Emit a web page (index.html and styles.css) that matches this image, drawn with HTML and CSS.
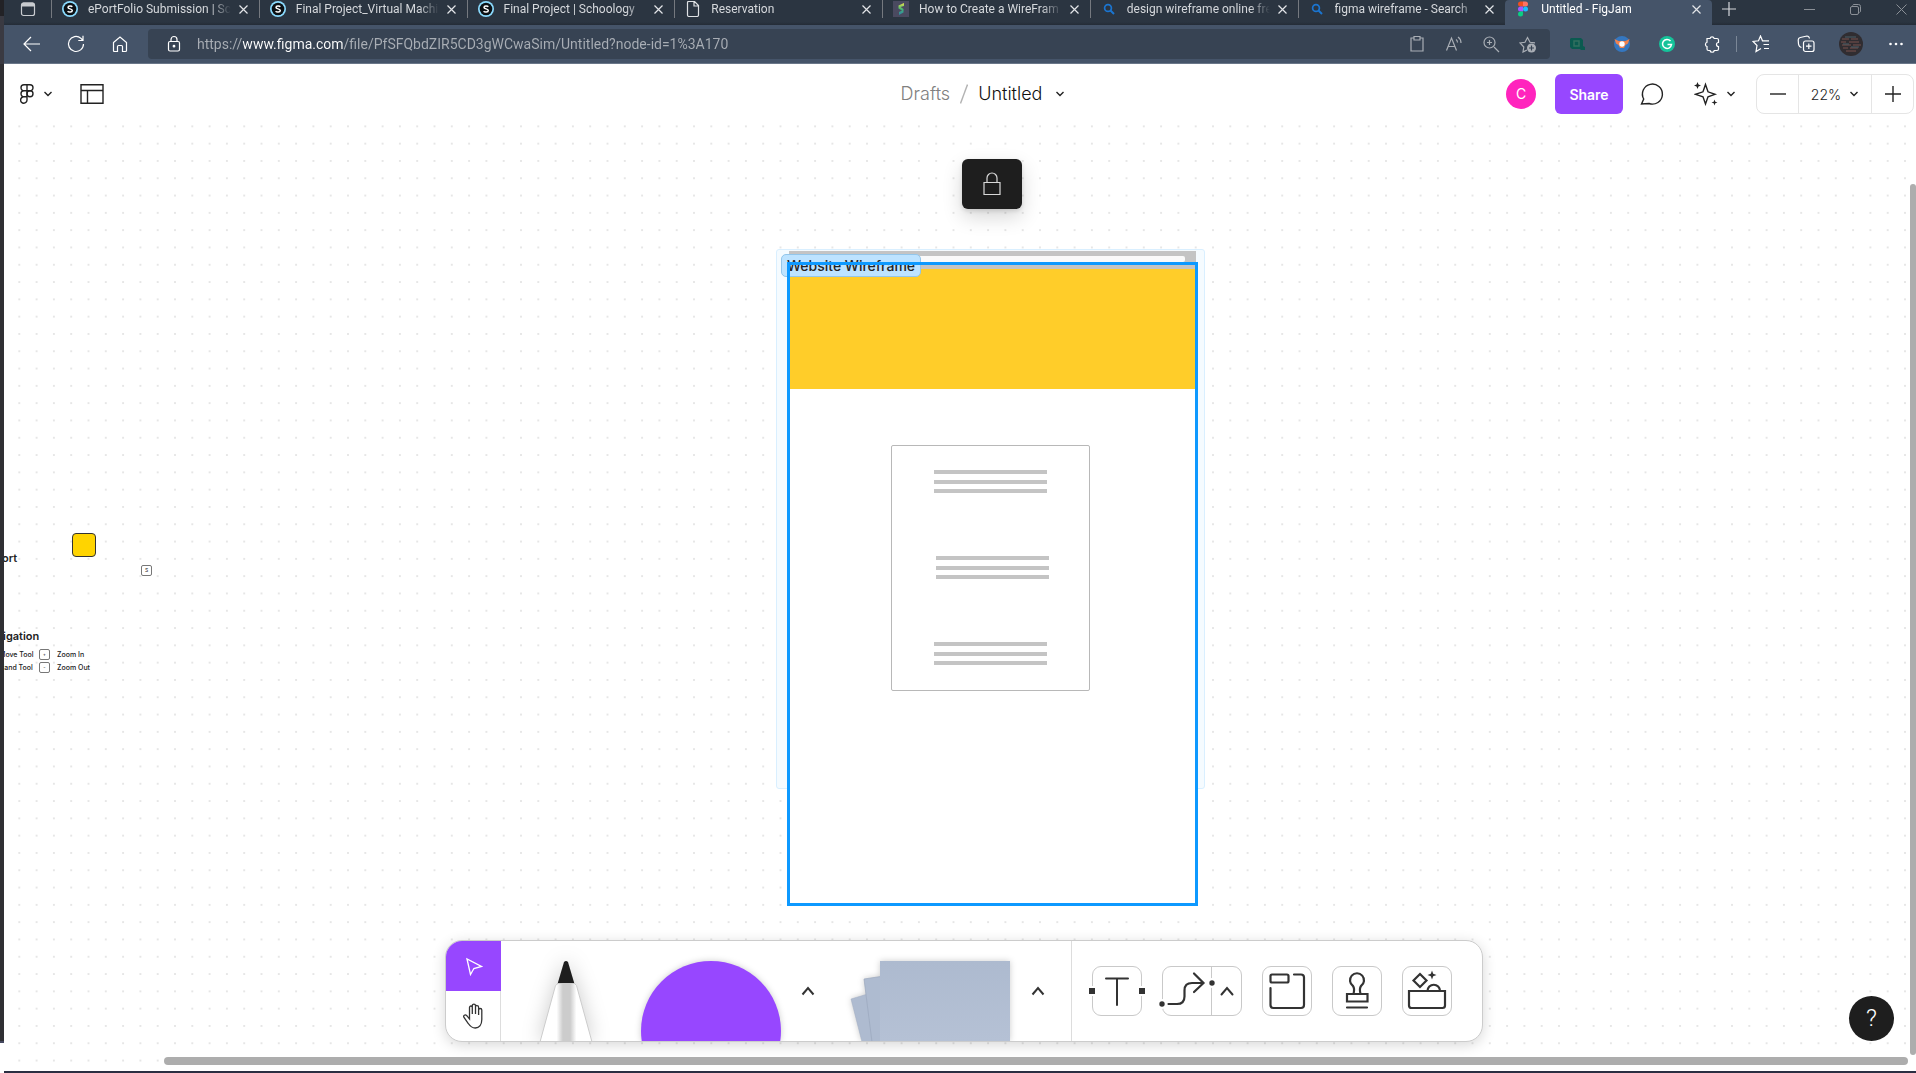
FILE: index.html
```html
<!DOCTYPE html>
<html lang="en">
<head>
<meta charset="utf-8">
<title>Untitled - FigJam</title>
<link rel="stylesheet" href="styles.css">
</head>
<body>
<svg class="symbols" aria-hidden="true">
  <symbol id="x" viewBox="0 0 9 9"><path d="M.5.5l8 8m0-8l-8 8"/></symbol>
  <symbol id="schoology" viewBox="0 0 16 16"><circle cx="8" cy="8" r="8" fill="#8bdcff"/><circle cx="8" cy="8" r="6.300" fill="#0b1014"/><path d="M10.300 5.700C9.600 4.800 6 4.500 6 6.400c0 1.900 4.300 1 4.300 3.100 0 2-3.700 1.900-4.700.7" fill="none" stroke="#fff" stroke-width="1.500"/></symbol>
  <symbol id="search" viewBox="0 0 16 16"><circle cx="7" cy="7" r="3.400" fill="none" stroke="#1b75d0" stroke-width="1.700"/><path d="M9.500 9.500L13 13" stroke="#1b75d0" stroke-width="2"/></symbol>
  <symbol id="down" viewBox="0 0 10 6"><path d="M1.500 1L5 4.500 8.500 1"/></symbol>
  <symbol id="up" viewBox="0 0 14 10"><path d="M1.500 8.500L7 2l5.500 6.500"/></symbol>
</svg>
<div class="desktop-edge"></div>
<div class="window">
  <nav class="tabstrip" aria-label="Tabs">
    <button class="tab-actions" aria-label="Tab actions"><svg width="16" height="16" viewBox="0 0 16 16"><rect x="1.5" y="2" width="13" height="12.500" rx="2" fill="none" stroke="#c9ccd0" stroke-width="1.200"/><path d="M1.500 5.500V3.500a2 2 0 0 1 2-2h9a2 2 0 0 1 2 2v2z" fill="#c9ccd0"/></svg></button>
    <div class="tabs">
      <div class="tab"><svg class="fav" width="16" height="16"><use href="#schoology"/></svg><a class="tab-title" href="#">ePortFolio Submission | Sch</a><button class="close" aria-label="Close tab"><svg width="9" height="9"><use href="#x"/></svg></button></div>
      <div class="tab"><svg class="fav" width="16" height="16"><use href="#schoology"/></svg><a class="tab-title" href="#">Final Project_Virtual Machin</a><button class="close" aria-label="Close tab"><svg width="9" height="9"><use href="#x"/></svg></button></div>
      <div class="tab"><svg class="fav" width="16" height="16"><use href="#schoology"/></svg><a class="tab-title" href="#">Final Project | Schoology</a><button class="close" aria-label="Close tab"><svg width="9" height="9"><use href="#x"/></svg></button></div>
      <div class="tab"><svg class="fav" width="16" height="16" viewBox="0 0 16 16"><path d="M3.500.5h6l4 4v9.500a1.500 1.500 0 0 1-1.500 1.500H4A1.500 1.500 0 0 1 2.500 14V1.500a1 1 0 0 1 1-1zM9 .5V5h4.500" fill="none" stroke="#dfe2e5" stroke-width="1.200"/></svg><a class="tab-title" href="#">Reservation</a><button class="close" aria-label="Close tab"><svg width="9" height="9"><use href="#x"/></svg></button></div>
      <div class="tab"><svg class="fav" width="16" height="16" viewBox="0 0 16 16"><defs><linearGradient id="sg" x2="0" y2="1"><stop offset="0" stop-color="#e9e34b"/><stop offset=".5" stop-color="#45b872"/><stop offset="1" stop-color="#2f7fa8"/></linearGradient></defs><path d="M0 0h16v16H0z" fill="#4a4a60"/><path d="M11 2L5.500 4.500v3L9 9.500l-3 1.500v3l4.500-2.500V8L7.500 6 11 5z" fill="url(#sg)"/></svg><a class="tab-title" href="#">How to Create a WireFram</a><button class="close" aria-label="Close tab"><svg width="9" height="9"><use href="#x"/></svg></button></div>
      <div class="tab"><svg class="fav" width="16" height="16"><use href="#search"/></svg><a class="tab-title" href="#">design wireframe online fre</a><button class="close" aria-label="Close tab"><svg width="9" height="9"><use href="#x"/></svg></button></div>
      <div class="tab"><svg class="fav" width="16" height="16"><use href="#search"/></svg><a class="tab-title" href="#">figma wireframe - Search</a><button class="close" aria-label="Close tab"><svg width="9" height="9"><use href="#x"/></svg></button></div>
      <div class="tab active"><svg class="fav" width="16" height="16" viewBox="0 0 16 16"><path d="M8 .5H5.500a2.500 2.500 0 0 0 0 5H8z" fill="#f24e1e"/><path d="M8 .5h2.500a2.500 2.500 0 0 1 0 5H8z" fill="#ff7262"/><path d="M8 5.500H5.500a2.500 2.500 0 0 0 0 5H8z" fill="#a259ff"/><circle cx="10.500" cy="8" r="2.500" fill="#1abcfe"/><path d="M8 10.500H5.500A2.500 2.500 0 1 0 8 13z" fill="#0acf83"/></svg><a class="tab-title" href="#">Untitled - FigJam</a><button class="close" aria-label="Close tab"><svg width="9" height="9"><use href="#x"/></svg></button></div>
    </div>
    <button class="new-tab" aria-label="New tab"><svg width="14" height="14" viewBox="0 0 14 14"><path d="M7 0v14M0 7h14" stroke="#d5d8dc" stroke-width="1.200"/></svg></button>
    <div class="window-controls">
      <button aria-label="Minimize"><svg width="11" height="11" viewBox="0 0 11 11"><path d="M0 5.500h11"/></svg></button>
      <button aria-label="Restore"><svg width="11" height="11" viewBox="0 0 11 11"><rect x=".5" y="2.500" width="8" height="8" rx="1.500"/><path d="M2.500 1.500Q3 .5 4 .5h4.500a2 2 0 0 1 2 2V7q0 1-1 1.500"/></svg></button>
      <button aria-label="Close window"><svg width="11" height="11" viewBox="0 0 11 11"><path d="M.5.5l10 10m0-10l-10 10"/></svg></button>
    </div>
  </nav>

  <div class="navbar">
    <div class="nav-buttons">
      <button aria-label="Back"><svg width="18" height="18" viewBox="0 0 18 18"><path d="M17 9H1.500M8 2L1 9l7 7"/></svg></button>
      <button aria-label="Refresh"><svg width="18" height="18" viewBox="0 0 18 18"><path d="M16.500 9A7.500 7.500 0 1 1 13.800 3.200L15.500 5M16 .8V5.500h-4.700"/></svg></button>
      <button aria-label="Home"><svg width="18" height="18" viewBox="0 0 18 18"><path d="M2.500 7.500L9 2l6.500 5.500v8q0 1-1 1h-3v-5q0-1-1-1h-3q-1 0-1 1v5h-3q-1 0-1-1z"/></svg></button>
    </div>
    <div class="address">
      <button aria-label="Site information"><svg width="16" height="18" viewBox="0 0 16 18"><rect x="2.500" y="6.500" width="11" height="9.500" rx="1.500"/><path d="M5 6.500V4.500a3 3 0 0 1 6 0v2"/><circle cx="8" cy="11.200" r=".8" fill="#fff"/></svg></button>
      <input class="url" aria-label="Address" value="https://www.figma.com/file/PfSFQbdZIR5CD3gWCwaSim/Untitled?node-id=1%3A170">
      <div class="address-tools">
        <button aria-label="Clipboard"><svg width="18" height="18" viewBox="0 0 18 18"><path d="M6 3H3v13h12V3h-3M6 1.500h6V5H6z"/></svg></button>
        <button aria-label="Read aloud"><svg width="18" height="18" viewBox="0 0 18 18"><path d="M1.500 15.500L6.500 3l5 12.500M3.200 11.500h6.600M11 4.500q1.500 1 1.500 3M13 2q3 2 3 6"/></svg></button>
        <button aria-label="Zoom"><svg width="18" height="18" viewBox="0 0 18 18"><circle cx="7.500" cy="7.500" r="5.500"/><path d="M12 12l5 5M5 7.500h5M7.500 5v5"/></svg></button>
        <button aria-label="Add to favorites"><svg width="18" height="18" viewBox="0 0 18 18"><path d="M8 15l-4 2 .8-5L1 8l5-.7L8.500 2.500 11 7.300l5 .5"/><circle cx="12.500" cy="13" r="4.500" fill="#a9aeb5" stroke="none"/><path class="plus" d="M10 13h5M12.500 10.500v5"/></svg></button>
      </div>
    </div>
    <div class="extensions">
      <button aria-label="Extension Q"><svg width="18" height="18" viewBox="0 0 18 18"><path d="M3 3h10l2 2v6l2 1v3h-4l-1-1H4l-2-2V4z" fill="#0b5a50" stroke="none"/><rect x="6" y="6" width="5" height="5" stroke="#33705f" stroke-width="1.500"/></svg></button>
      <button aria-label="Extension fox"><svg width="18" height="18" viewBox="0 0 18 18"><circle cx="9" cy="9" r="8" fill="#3577c0" stroke="none"/><path d="M1.500 4l4 2h7l4-2-1.500 4.500L12.500 10 11 13H7l-1.500-3L3 8.500z" fill="#ee8250" stroke="none"/><circle cx="9" cy="9" r="2.700" fill="#fff" stroke="none"/></svg></button>
      <button aria-label="Grammar"><svg width="18" height="18" viewBox="0 0 18 18"><circle cx="9" cy="9" r="8" fill="#15c39a" stroke="none"/><path d="M12.500 6A4.500 4.500 0 1 0 13.500 9.500H9.500" stroke-width="1.500"/></svg></button>
      <button aria-label="Extensions"><svg width="18" height="18" viewBox="0 0 18 18"><path d="M4 3.500h3a2.200 2.200 0 0 1 4.200 0H14q1.500 0 1.500 1.500v2.500a2 2 0 0 0 0 4V14q0 1.500-1.500 1.500h-2.700a2.200 2.200 0 0 1-4.300 0H5.500Q4 15.500 4 14v-2.500a2.200 2.200 0 0 1 0-4.200z"/></svg></button>
      <span class="nav-rule"></span>
      <button aria-label="Favorites"><svg width="18" height="18" viewBox="0 0 18 18"><path d="M9 13.500L4 16.500l1-6L1 6.500l5.500-.7L8.500 1l2 4.800H17M11.500 9.500H17M12 13.500h5"/></svg></button>
      <button aria-label="Collections"><svg width="18" height="18" viewBox="0 0 18 18"><rect x="6.500" y="6" width="10.500" height="10.500" rx="2"/><path d="M4.500 12.500Q2 12 1.500 9L1.200 5q0-2 2-2.500L10 1q2 0 2.500 2.500M9 11.200h5.500M11.800 8.500v5.500"/></svg></button>
      <button aria-label="Profile"><svg class="avatar" width="24" height="24" viewBox="0 0 24 24"><circle cx="12" cy="12" r="12" fill="#302d31" stroke="none"/><path d="M3 7h7m2 0h7M2 10h5m3 0h10M3 13h9m2 0h8M4 16h5m2 0h8M7 19h10" stroke="#79534f" stroke-width="1"/><path d="M6 5h11M4 12h6M12 15h8" stroke="#48606b"/></svg></button>
      <button aria-label="Settings"><svg width="18" height="18" viewBox="0 0 18 18"><g fill="#fff" stroke="none"><circle cx="3.500" cy="9" r="1.300"/><circle cx="9" cy="9" r="1.300"/><circle cx="14.500" cy="9" r="1.300"/></g></svg></button>
    </div>
  </div>

  <header class="app-header">
    <div class="header-left">
      <button class="menu" aria-label="Main menu"><svg width="14" height="20" viewBox="0 0 14 20"><path d="M7 .8H4a3 3 0 0 0 0 6h3zM7 .8h3a3 3 0 0 1 0 6H7zM7 6.800H4a3 3 0 0 0 0 6h3zM7 12.800H4a3.200 3.200 0 1 0 3 3.200z"/><circle cx="10" cy="9.800" r="3"/></svg><svg width="10" height="6"><use href="#down"/></svg></button>
      <button aria-label="Layout"><svg width="24" height="20" viewBox="0 0 24 20"><path d="M1 .8h22v18.400H1zM1 6.500h22M7.500 6.500v12.700"/></svg></button>
    </div>
    <div class="file-title"><a href="#">Drafts</a><svg width="8" height="20" viewBox="0 0 8 20"><path class="slash" d="M7.500.5l-7 19"/></svg><button>Untitled<svg width="10" height="6"><use href="#down"/></svg></button></div>
    <div class="header-right">
      <span class="user">C</span>
      <button class="share">Share</button>
      <button class="comment" aria-label="Comment"><svg width="24" height="24" viewBox="0 0 24 24"><path d="M1.500 22l2.200-5A10 10 0 1 1 9 21.500z"/></svg></button>
      <button class="ai" aria-label="Effects"><svg width="24" height="24" viewBox="0 0 24 24"><path d="M11.500 2.500L14 9.800l7 2.500-7 2.500-2.500 7.200L9 14.800l-7.500-2.500L9 9.800z"/><path d="M3.500 0l1 2.500 2.500 1-2.500 1-1 2.500-1-2.500L0 3.500l2.500-1zM20.500 17.500l.8 2.200 2.200.8-2.200.8-.8 2.200-.8-2.200-2.200-.8 2.200-.8z" fill="#222" stroke="none"/></svg><svg width="10" height="6"><use href="#down"/></svg></button>
      <div class="zoom">
        <button aria-label="Zoom out"><svg width="16" height="16" viewBox="0 0 16 16"><path d="M0 8h16"/></svg></button>
        <button>22%<svg width="10" height="6"><use href="#down"/></svg></button>
        <button aria-label="Zoom in"><svg width="16" height="16" viewBox="0 0 16 16"><path d="M0 8h16M8 0v16"/></svg></button>
      </div>
    </div>
  </header>

  <main class="board">
    <svg class="dots" width="100%" height="100%"><defs><pattern id="grid" x="6.650" y="-6.300" width="17.300" height="17.300" patternUnits="userSpaceOnUse"><rect x="8" y="8" width="1.300" height="1.300" fill="#c8c8c8"/></pattern></defs><rect width="100%" height="100%" fill="url(#grid)"/></svg>

    <div class="swatch"></div>
    <span class="item heading h-support">ort</span>
    <kbd class="item key k-s">S</kbd>
    <span class="item heading h-nav">igation</span>
    <div class="item shortcuts">
      <span>Move Tool</span><kbd class="key">+</kbd><span>Zoom In</span>
      <span>Hand Tool</span><kbd class="key">-</kbd><span>Zoom Out</span>
    </div>

    <div class="section"></div>
    <div class="browser-bar"><div class="browser-field"></div></div>
    <div class="page">
      <div class="hero"></div>
      <div class="card">
        <div class="lines"><i></i><i></i><i></i></div>
        <div class="lines shifted"><i></i><i></i><i></i></div>
        <div class="lines"><i></i><i></i><i></i></div>
      </div>
    </div>
    <span class="section-label">Website Wireframe</span>
    <div class="selection"></div>
    <button class="unlock" aria-label="Unlock"><svg width="18" height="24" viewBox="0 0 18 24"><path d="M1 10.500h16v12H1zM4 10.500V6a5 5 0 0 1 10 0v4.500" fill="none" stroke="#d8d8d8" stroke-width="1.200"/></svg></button>

    <div class="toolbar">
      <div class="modes">
        <button class="mode selected" aria-label="Select"><svg width="18" height="20" viewBox="0 0 18 20"><path d="M2 3l3.500 15.500 3.400-6 7.600-2z" fill="none" stroke="#fff" stroke-width="1.300"/></svg></button>
        <button class="mode" aria-label="Hand"><svg width="24" height="28" viewBox="0 0 24 28"><path d="M7.500 13.500V5.500c0-2 2.800-2 2.800 0V12M10.300 6V3.700c0-2.200 3.200-2.200 3.200 0V12M13.500 5c0-2 3.100-2 3.100.2V13M16.600 8c0-2 3.200-2 3.200 0v9.500C19.800 23 17 26 13.300 26c-3.600 0-5-1.500-7-4.500L2 15.500c-1.200-2 1.200-3.500 2.800-1.800l2.700 3.300v-4" fill="none" stroke="#333" stroke-width="1.300"/></svg></button>
      </div>
      <button class="tool marker" aria-label="Marker"><svg width="80" height="80" viewBox="0 0 80 80"><defs><linearGradient id="pen" gradientUnits="userSpaceOnUse" x1="14" x2="66"><stop offset=".32" stop-color="#fff"/><stop offset=".44" stop-color="#ccc"/><stop offset=".58" stop-color="#ccc"/><stop offset=".7" stop-color="#fff"/></linearGradient></defs><path d="M38 1q2-2 4 0l6.500 22h-17z" fill="#1e1e1e"/><path d="M32 22.500h16.500l2 2L66 81H14l15.500-56.500z" fill="url(#pen)" stroke="#ccc"/></svg></button>
      <button class="tool shape" aria-label="Shape"><svg width="140" height="80" viewBox="0 0 140 80"><circle cx="70" cy="70" r="70" fill="#9747ff"/></svg></button>
      <button class="caret" aria-label="More shapes"><svg width="14" height="10"><use href="#up"/></svg></button>
      <button class="tool notes" aria-label="Sticky note"><svg width="160" height="80" viewBox="0 0 160 80"><defs><linearGradient id="note" x2="0" y2="1"><stop stop-color="#adbacf"/><stop offset="1" stop-color="#b5c1d5"/></linearGradient></defs><path d="M1 38l30-9v52H12z" fill="#aebbd0" stroke="#a0adc2" stroke-width=".5"/><path d="M14 18l20-3v66H22z" fill="#aebbd0" stroke="#9ba8bd" stroke-width=".7"/><path d="M30 0h130v80H30z" fill="url(#note)"/></svg></button>
      <button class="caret" aria-label="More notes"><svg width="14" height="10"><use href="#up"/></svg></button>
      <div class="boxes">
        <button class="box" aria-label="Text"><svg width="60" height="50" viewBox="0 0 60 50"><path d="M19 12.500h22M30 12.500V39" stroke-width="2"/><path d="M0 20h10v10H0zM50 20h10v10H50z" fill="#fff" stroke="none"/><path d="M2 22h6v6H2zM52 22h6v6h-6z" fill="#333" stroke="none"/></svg></button>
        <div class="box split">
          <button aria-label="Connector"><svg width="60" height="50" viewBox="0 0 60 50"><path d="M11.500 38H20q7.500 0 7.500-7.500v-6Q27.500 17 35 17h11M37 7.500L46.500 17 37 26" stroke-width="2.200"/><circle cx="5" cy="38" r="5" fill="#fff" stroke="none"/><circle cx="5" cy="38" r="2.700" fill="#333" stroke="none"/><circle cx="55" cy="17" r="5" fill="#fff" stroke="none"/><circle cx="55" cy="17" r="2.700" fill="#333" stroke="none"/></svg></button>
          <button aria-label="More connectors"><svg width="14" height="10"><use href="#up"/></svg></button>
        </div>
        <button class="box" aria-label="Section"><svg width="50" height="50" viewBox="0 0 50 50"><rect x="8.500" y="8.500" width="18" height="8" rx="1.500" stroke-width="2.200"/><path d="M32 8.500h7q3 0 3 3V39q0 3-3 3H11.500q-3 0-3-3V22" stroke-width="2.200"/></svg></button>
        <button class="box" aria-label="Stamp"><svg width="50" height="50" viewBox="0 0 50 50"><path d="M21.500 28c1-4 1-6-.5-8a7 7 0 1 1 8 0c-1.500 2-1.500 4-.5 8M15 28h20.500v7.500H15zM15 41.500h20" stroke-width="2.200"/></svg></button>
        <button class="box" aria-label="Widgets"><svg width="50" height="50" viewBox="0 0 50 50"><path d="M7 25h36v14.500q0 2.500-2.500 2.500h-31Q7 42 7 39.500zM25.500 25a6 6 0 0 1 12.500 0M18 8l6.500 6.500L18 21l-6.500-6.500z" stroke-width="2.200"/><path d="M30 4.500l1.200 3.200 3.300 1.300-3.300 1.300L30 13.500l-1.200-3.200L25.500 9l3.300-1.300z" fill="#333" stroke="none"/></svg></button>
      </div>
    </div>
    <button class="help">?</button>
    <div class="scroll-v"></div>
    <div class="scroll-h"></div>
  </main>
</div>
</body>
</html>
```
FILE: styles.css
```css
* { box-sizing: border-box; }
body {
  margin: 0;
  height: 100vh;
  display: flex;
  overflow: hidden;
  background: #fff;
  font-family: Inter, sans-serif;
  color: #222;
}
button {
  display: flex;
  align-items: center;
  justify-content: center;
  padding: 0;
  border: 0;
  background: none;
  font: inherit;
  color: inherit;
}
a { color: inherit; text-decoration: none; }
svg { flex: none; }
.symbols { position: absolute; width: 0; height: 0; }

.desktop-edge {
  flex: none;
  width: 4px;
  height: calc(100vh - 30px);
  background: linear-gradient(#222226 16px, #3a3a42 16px, #3a3a42 64px, #2f2f33 64px);
  border-bottom: 2px solid #454860;
}
.window {
  flex: 1;
  min-width: 0;
  display: flex;
  flex-direction: column;
  border-bottom: 2px solid #2b2e42;
}

/* Browser tabs */
.tabstrip {
  display: flex;
  height: 25px;
  background: linear-gradient(#2b3541 22px, #242c37);
  font: 12px/18px Roboto, sans-serif;
  color: #d5d8dc;
}
.tabstrip > button { height: 18px; }
.tab-actions { width: 47px; }
.tabs { display: flex; flex: 0 1 1661px; min-width: 0; }
.tab {
  flex: 1 1 0;
  min-width: 0;
  display: flex;
  align-items: center;
  height: 18px;
  padding: 0 11px 0 10px;
  border-left: 1px solid #75797f;
}
.tab.active {
  height: 25px;
  padding-bottom: 7px;
  border: 0;
  border-radius: 4px 4px 0 0;
  background: #455469;
  color: #fff;
}
.fav { margin-right: 10px; }
.tab-title {
  flex: 1;
  min-width: 0;
  overflow: hidden;
  white-space: nowrap;
  -webkit-mask-image: linear-gradient(90deg, #000 calc(100% - 20px), transparent);
  mask-image: linear-gradient(90deg, #000 calc(100% - 20px), transparent);
}
.close { width: 9px; margin-left: 8px; }
.close svg { stroke: #e3e5e8; stroke-width: 1.2; }
.new-tab { width: 34px; }
.window-controls {
  display: flex;
  gap: 35px;
  height: 18px;
  margin-left: auto;
  padding-right: 9px;
}
.window-controls svg { fill: none; stroke: #8b9097; }

/* Address row */
.navbar {
  display: flex;
  align-items: center;
  height: 39px;
  background: #455469;
  border-bottom: 1px solid #6a7789;
}
.navbar svg { fill: none; stroke: #fff; stroke-width: 1.2; }
.nav-buttons { display: flex; gap: 26px; padding: 0 19px; }
.address {
  flex: 1;
  display: flex;
  align-items: center;
  height: 30px;
  padding: 0 13px 0 18px;
  border-radius: 4px;
  background: #374353;
}
.url {
  flex: 1;
  min-width: 0;
  margin-left: 15px;
  padding: 0;
  border: 0;
  outline: 0;
  font: 14px/20px Roboto, sans-serif;
  color: transparent;
  background: linear-gradient(90deg, #a9aeb5 46px, #fff 46px, #fff 146px, #a9aeb5 146px);
  -webkit-background-clip: text;
  background-clip: text;
}
.address-tools { display: flex; gap: 19px; }
.address .address-tools svg { stroke: #a9aeb5; }
.address .plus { stroke: #374353; }
.extensions { display: flex; align-items: center; gap: 27px; padding: 0 11px 0 18px; }
.nav-rule { width: 1px; height: 16px; margin: 0 -12px; background: #7b8797; }
.avatar { margin: 0 -3px; }

/* App header */
.app-header {
  display: grid;
  grid-template-columns: 1fr auto 1fr;
  align-items: center;
  height: 60px;
  padding: 0 2px 0 16px;
}
.app-header svg { fill: none; stroke: #222; stroke-width: 1.4; }
.header-left { display: flex; gap: 27px; }
.menu { gap: 9px; }
.file-title {
  display: flex;
  align-items: center;
  gap: 10px;
  padding-left: 32px;
  font-size: 18px;
  font-weight: 300;
  line-height: 24px;
}
.file-title a { color: #808080; }
.file-title button { gap: 13px; color: #111; }
.app-header .slash { stroke: #b3b3b3; }
.header-right {
  display: flex;
  align-items: center;
  justify-content: flex-end;
}
.user {
  width: 30px;
  height: 30px;
  margin-right: 19px;
  border-radius: 50%;
  background: #ff24bd;
  color: #fff;
  font-size: 14px;
  line-height: 30px;
  text-align: center;
}
.share {
  width: 68px;
  height: 40px;
  border-radius: 6px;
  background: #9747ff;
  color: #fff;
  font-size: 14px;
  font-weight: 600;
}
.comment { margin-left: 17px; }
.ai { gap: 8px; margin: 0 20px 0 30px; }
.zoom {
  display: flex;
  height: 40px;
  border: 1px solid #e5e5e5;
  border-radius: 8px;
  font-size: 14px;
  font-weight: 300;
}
.zoom button { width: 41px; }
.zoom button:nth-child(2) {
  width: 74px;
  gap: 8px;
  border: solid #e5e5e5;
  border-width: 0 1px;
}

/* Canvas: objects are placed freely on the board */
.board {
  position: relative;
  flex: 1;
  overflow: hidden;
  background: #fff;
}
.dots { position: absolute; inset: 0; }
.board > .item, .swatch, .section, .browser-bar, .page,
.section-label, .selection { position: absolute; }
.swatch {
  left: 68px;
  top: 409px;
  width: 24px;
  height: 24px;
  border: 1px solid #333;
  border-radius: 4px;
  background: #ffd400;
}
.heading { font-size: 11px; font-weight: 600; line-height: 14px; }
.h-support { left: -2px; top: 427px; }
.h-nav { left: -1px; top: 505px; }
.key {
  display: block;
  width: 11px;
  height: 11px;
  border: 1px solid #777;
  border-radius: 2px;
  background: #fff;
  font: 5px/9px Inter, sans-serif;
  text-align: center;
}
.k-s { left: 137px; top: 441px; }
.shortcuts {
  left: -5px;
  top: 525px;
  display: grid;
  grid-template-columns: 33px 11px auto;
  column-gap: 7px;
  row-gap: 2px;
  align-items: center;
  font-size: 7px;
  font-weight: 500;
  line-height: 11px;
  white-space: nowrap;
}
.section {
  left: 772px;
  top: 125px;
  width: 429px;
  height: 540px;
  border: 1px solid #d9efff;
  border-radius: 3px;
  background: #f5fbff;
}
.browser-bar {
  left: 785px;
  top: 127px;
  width: 407px;
  height: 18px;
  padding: 5px 11px 0 6px;
  background: #c4c4c4;
}
.browser-field { height: 6px; border-radius: 2px; background: #fafafa; }
.page {
  left: 785px;
  top: 145px;
  width: 407px;
  height: 635px;
  background: #fff;
}
.hero { height: 120px; background: #ffcd29; }
.card {
  display: flex;
  flex-direction: column;
  align-items: center;
  gap: 63px;
  width: 199px;
  height: 246px;
  margin: 56px 0 0 102px;
  padding-top: 24px;
  border: 1px solid #b8b8b8;
  border-radius: 2px;
}
.lines {
  display: flex;
  flex-direction: column;
  justify-content: space-between;
  width: 113px;
  height: 23px;
}
.lines i { height: 4px; background: #c4c4c4; }
.shifted { margin-left: 4px; }
.section-label {
  left: 777px;
  top: 130px;
  height: 23px;
  padding: 0 5px;
  border: 1px solid #93c6ea;
  border-radius: 5px;
  background: #bde3ff;
  font-size: 14px;
  font-weight: 500;
  line-height: 21px;
}
.selection {
  left: 783px;
  top: 138px;
  width: 411px;
  height: 644px;
  border: 3px solid #0d99ff;
}
.unlock {
  position: absolute;
  left: 958px;
  top: 35px;
  width: 60px;
  height: 50px;
  border-radius: 6px;
  background: #1e1e1e;
  box-shadow: 0 8px 20px rgba(0, 0, 0, .16), 0 2px 4px rgba(0, 0, 0, .12);
}

/* Floating toolbar */
.toolbar {
  position: absolute;
  left: calc(50% - 515px);
  bottom: 29px;
  display: flex;
  width: 1038px;
  height: 102px;
  overflow: hidden;
  border: 1px solid #ccc;
  border-radius: 17px;
  background: #fff;
  box-shadow: 0 3px 14px rgba(0, 0, 0, .16);
}
.modes { width: 55px; border-right: 1px solid #ddd; }
.mode { width: 55px; height: 50px; }
.mode.selected { background: #9747ff; }
.tool { align-items: flex-end; height: 100px; }
.marker { width: 130px; }
.marker svg { filter: drop-shadow(0 0 10px #0003); }
.shape { width: 152px; padding-left: 8px; }
.shape svg, .notes svg { filter: drop-shadow(0 0 3px #0003); }
.caret { width: 50px; }
.notes { width: 180px; padding-left: 14px; }
.caret svg { fill: none; stroke: #333; stroke-width: 2; }
.boxes {
  display: flex;
  align-items: center;
  gap: 20px;
  margin-left: auto;
  padding: 0 30px 0 20px;
  border-left: 1px solid #ddd;
}
.box {
  width: 50px;
  height: 50px;
  border: 1px solid #c9c9c9;
  border-radius: 9px;
}
.boxes svg { fill: none; stroke: #333; stroke-linecap: round; stroke-width: 2; }
.split { display: flex; width: 80px; }
.split button { width: 30px; }
.split button:first-child { width: 49px; border-right: 1px solid #c9c9c9; }
.split button:first-child svg { position: relative; }

.help {
  position: absolute;
  right: 22px;
  bottom: 30px;
  width: 45px;
  height: 45px;
  border-radius: 50%;
  background: #1e1e1e;
  color: #fff;
  font: 300 24px/45px Roboto, sans-serif;
}
.scroll-v, .scroll-h { position: absolute; border-radius: 4px; background: #adadad; }
.scroll-v { right: 0; top: 60px; bottom: 16px; width: 6px; }
.scroll-h { left: 160px; right: 8px; bottom: 6px; height: 8px; }
```
